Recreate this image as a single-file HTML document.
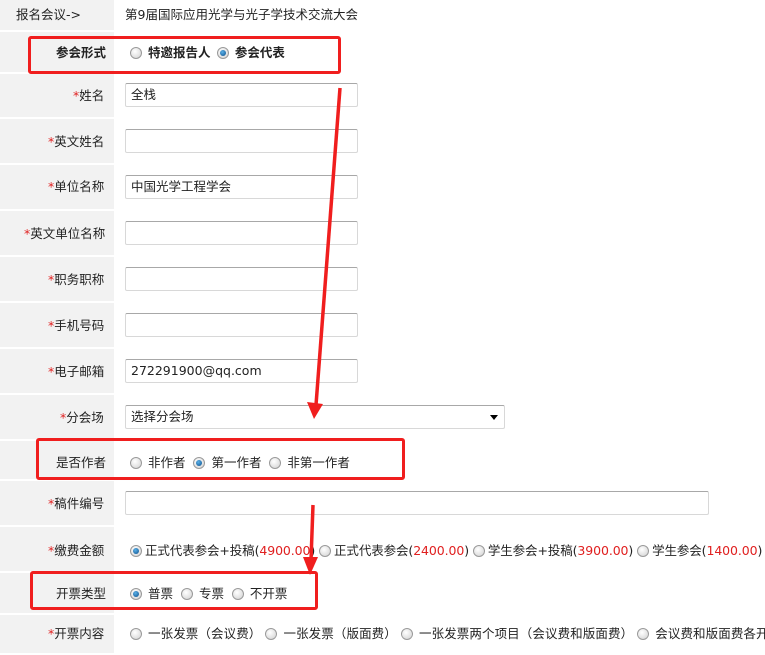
<!DOCTYPE html>
<html><head><meta charset="utf-8"><style>
*{margin:0;padding:0;box-sizing:border-box}
body{width:765px;height:645px;overflow:hidden;background:#fff;font-family:"DejaVu Sans","Noto Sans CJK SC",sans-serif;font-size:12.5px;line-height:16px;color:#222;position:relative}
.lab{position:absolute;left:0;width:114px;background:#f2f2f2;border-bottom:2px solid #fff}
.t{position:absolute;white-space:nowrap}
.r{color:#e02020}
.inp{position:absolute;left:125px;height:24px;border:1px solid #d8d8d8;border-top-color:#a8a8a8;border-radius:2px;padding:3px 5px;line-height:16px;background:#fff}
.rb{display:inline-block;width:12px;height:12px;border-radius:50%;border:1px solid #9a9a9a;background:radial-gradient(circle at 40% 35%,#fff,#d0d0d0);vertical-align:-2px;margin-right:6px;position:relative}
.rb.on::after{content:"";position:absolute;left:2px;top:2px;width:6px;height:6px;border-radius:50%;background:radial-gradient(circle at 40% 35%,#5ab0e8,#0a4e8a)}
.box{position:absolute;border:3px solid #f01e1e;border-radius:3px}
</style></head><body>
<div class="lab" style="top:0;height:32px"></div>
<div class="t" style="left:16px;top:7px">报名会议-&gt;</div>
<div class="t" style="left:125px;top:7px">第9届国际应用光学与光子学技术交流大会</div>

<div class="lab" style="top:32px;height:42px"></div><div class="t" style="left:56px;top:45px;font-weight:bold">参会形式</div>
<div class="t" style="left:130px;top:45px;font-weight:bold"><span class="rb"></span>特邀报告人 <span class="rb on" style="margin-left:2px"></span>参会代表</div>

<div class="lab" style="top:74px;height:45px"></div><div class="t" style="left:73px;top:88px"><span class="r">*</span>姓名</div>
<div class="inp" style="top:83px;width:233px">全栈</div>
<div class="lab" style="top:119px;height:46px"></div><div class="t" style="left:48px;top:134px"><span class="r">*</span>英文姓名</div>
<div class="inp" style="top:129px;width:233px"></div>
<div class="lab" style="top:165px;height:46px"></div><div class="t" style="left:48px;top:179px"><span class="r">*</span>单位名称</div>
<div class="inp" style="top:175px;width:233px">中国光学工程学会</div>
<div class="lab" style="top:211px;height:46px"></div><div class="t" style="left:24px;top:226px"><span class="r">*</span>英文单位名称</div>
<div class="inp" style="top:221px;width:233px"></div>
<div class="lab" style="top:257px;height:46px"></div><div class="t" style="left:48px;top:272px"><span class="r">*</span>职务职称</div>
<div class="inp" style="top:267px;width:233px"></div>
<div class="lab" style="top:303px;height:46px"></div><div class="t" style="left:48px;top:318px"><span class="r">*</span>手机号码</div>
<div class="inp" style="top:313px;width:233px"></div>
<div class="lab" style="top:349px;height:46px"></div><div class="t" style="left:48px;top:364px"><span class="r">*</span>电子邮箱</div>
<div class="inp" style="top:359px;width:233px">272291900@qq.com</div>
<div class="lab" style="top:395px;height:46px"></div><div class="t" style="left:60px;top:410px"><span class="r">*</span>分会场</div>
<div class="inp" style="top:405px;width:380px">选择分会场<span style="position:absolute;right:6px;top:9px;border:4px solid transparent;border-top:5px solid #000;border-bottom:0"></span></div>

<div class="lab" style="top:441px;height:40px"></div><div class="t" style="left:56px;top:455px">是否作者</div>
<div class="t" style="left:130px;top:455px"><span class="rb"></span>非作者 &nbsp;<span class="rb on"></span>第一作者 &nbsp;<span class="rb"></span>非第一作者</div>
<div class="lab" style="top:481px;height:46px"></div><div class="t" style="left:48px;top:496px"><span class="r">*</span>稿件编号</div>
<div class="inp" style="top:491px;width:584px"></div>
<div class="lab" style="top:527px;height:46px"></div><div class="t" style="left:48px;top:543px"><span class="r">*</span>缴费金额</div>
<div class="t" style="left:130px;top:543px;letter-spacing:-0.1px"><span class="rb on" style="margin-right:3px"></span>正式代表参会+投稿(<span class="r">4900.00</span>) <span class="rb" style="margin-right:3px"></span>正式代表参会(<span class="r">2400.00</span>) <span class="rb" style="margin-right:3px"></span>学生参会+投稿(<span class="r">3900.00</span>) <span class="rb" style="margin-right:3px"></span>学生参会(<span class="r">1400.00</span>)</div>
<div class="lab" style="top:573px;height:42px"></div><div class="t" style="left:56px;top:586px">开票类型</div>
<div class="t" style="left:130px;top:586px"><span class="rb on"></span>普票 &nbsp;<span class="rb"></span>专票 &nbsp;<span class="rb"></span>不开票</div>
<div class="lab" style="top:615px;height:40px"></div><div class="t" style="left:48px;top:626px"><span class="r">*</span>开票内容</div>
<div class="t" style="left:130px;top:626px;letter-spacing:0.1px"><span class="rb"></span>一张发票（会议费） <span class="rb"></span>一张发票（版面费） <span class="rb"></span>一张发票两个项目（会议费和版面费） <span class="rb"></span>会议费和版面费各开</div>

<div class="box" style="left:28px;top:36px;width:313px;height:38px"></div>
<div class="box" style="left:36px;top:438px;width:369px;height:42px"></div>
<div class="box" style="left:30px;top:571px;width:288px;height:39px"></div>

<svg style="position:absolute;left:0;top:0" width="765" height="645">
<line x1="340" y1="88" x2="316" y2="405" stroke="#f01e1e" stroke-width="3.5"/>
<polygon points="307,402 323,404 314,419" fill="#f01e1e"/>
<line x1="313" y1="505" x2="311" y2="560" stroke="#f01e1e" stroke-width="3.5"/>
<polygon points="303,557 318,557 310,575" fill="#f01e1e"/>
</svg>
</body></html>
